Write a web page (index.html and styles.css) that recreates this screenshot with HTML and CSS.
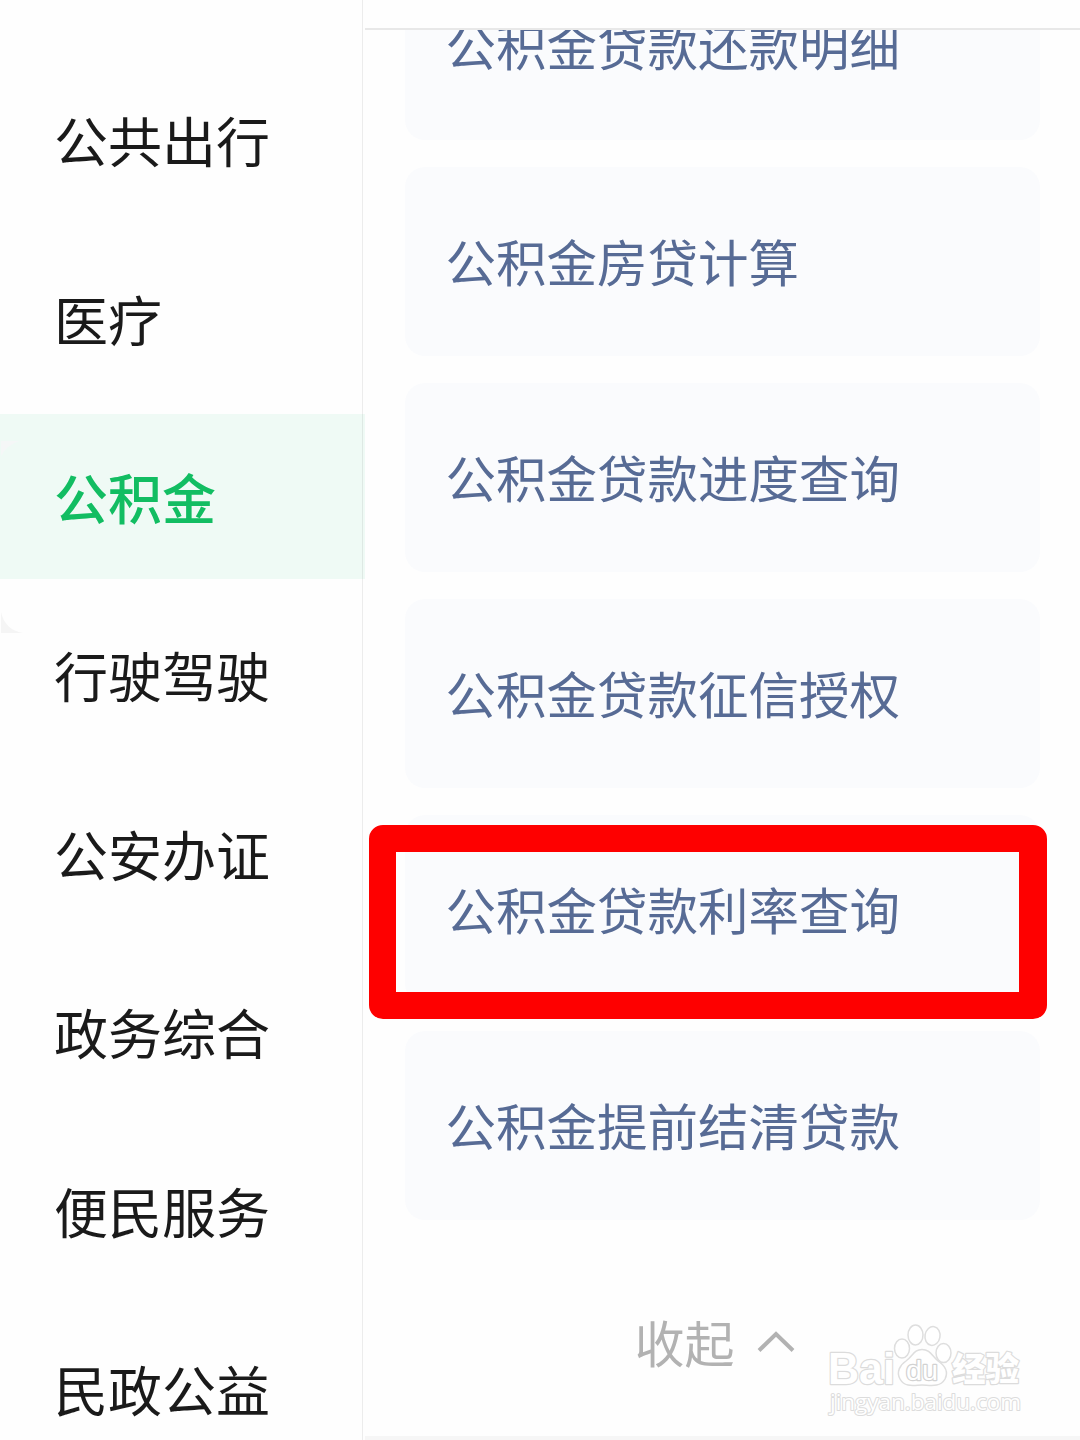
FILE: index.html
```html
<!DOCTYPE html>
<html lang="zh-CN">
<head>
  <meta charset="UTF-8" />
  <meta name="viewport" content="width=device-width, initial-scale=1.0" />
  <title>公积金</title>
  <link rel="stylesheet" href="styles.css">
</head>
<body>

<div class="page">
  <nav class="sidebar">
    <a class="nav-item">公共出行</a>
    <a class="nav-item">医疗</a>
    <a class="nav-item active">公积金</a>
    <a class="nav-item">行驶驾驶</a>
    <a class="nav-item">公安办证</a>
    <a class="nav-item">政务综合</a>
    <a class="nav-item">便民服务</a>
    <a class="nav-item">民政公益</a>
    <svg class="corners" width="24" height="194" viewBox="0 0 24 194">
      <path d="M1 1H19Q7 5 1 16Z" fill="#f5f7f7" />
      <path d="M1 172Q5 190 23 193H1Z" fill="#f5f5f5" />
    </svg>
  </nav>

  <main class="content">
    <div class="topbar"></div>
    <div class="list">
      <a class="card">公积金贷款还款明细</a>
      <a class="card">公积金房贷计算</a>
      <a class="card">公积金贷款进度查询</a>
      <a class="card">公积金贷款征信授权</a>
      <a class="card marked">公积金贷款利率查询</a>
      <a class="card">公积金提前结清贷款</a>
    </div>
    <div class="collapse">
      <span>收起</span>
      <svg width="38" height="24" viewBox="0 0 38 24">
        <path d="M2 21.500L19 5L36 21.500" fill="none" stroke="#b2b2b2" stroke-width="4" />
      </svg>
    </div>
  </main>
</div>

<!-- Watermark -->
<svg class="watermark" width="210" height="100" viewBox="0 0 210 100">
  <g class="wm-shape">
    <ellipse cx="82" cy="28.500" rx="7.500" ry="9.500" />
    <ellipse cx="95.500" cy="15" rx="7.500" ry="10" />
    <ellipse cx="112.500" cy="16" rx="7.500" ry="9.500" transform="rotate(10 112.500 16)" />
    <ellipse cx="123.500" cy="33" rx="7.500" ry="9.500" />
    <path d="M102 29.500C94 29.500 93 36 86 41C80 45 76 52 80 59C85 68 95 65 102 65C109 65 120 68 125 59C129 51 124 45 118 41C112 36 110 29.500 102 29.500Z" />
  </g>
  <text class="wm-logo" x="8" y="64" font-size="44" textLength="67" lengthAdjust="spacingAndGlyphs">Bai</text>
  <text class="wm-du" x="86" y="60" font-size="27" textLength="32" lengthAdjust="spacingAndGlyphs">du</text>
  <text class="wm-cn" x="132" y="61" font-size="33" textLength="67" lengthAdjust="spacingAndGlyphs">经验</text>
  <text class="wm-url" x="10" y="90" font-size="22" textLength="191" lengthAdjust="spacingAndGlyphs">jingyan.baidu.com</text>
</svg>

</body>
</html>
```
FILE: styles.css
```css
body {
  margin: 0;
  font-family: "Noto Sans CJK SC", sans-serif;
  background-color: #fefefe;
}

.page {
  display: flex;
  height: 1440px;
  overflow: hidden;
}

.sidebar {
  position: relative;
  box-sizing: border-box;
  width: 363px;
  flex-shrink: 0;
  display: flex;
  flex-direction: column;
  gap: 13.4px;
  padding-top: 57.2px;
  border-right: 1px solid #ececec;
}

.nav-item {
  height: 165px;
  flex-shrink: 0;
  padding-left: 54px;
  line-height: 165px;
  font-size: 54px;
  color: #1a1a1a;
}

.nav-item.active {
  margin-right: -3px;
  background-color: rgba(7, 180, 96, 0.06);
  color: #12bd62;
  font-weight: 500;
}

.corners {
  position: absolute;
  left: 0;
  top: 440px;
}

.content {
  flex: 1;
  min-width: 0;
  margin-left: 2px;
  display: flex;
  flex-direction: column;
  border-bottom: 4px solid #f6f6f6;
  box-sizing: border-box;
}

.topbar {
  height: 28px;
  flex-shrink: 0;
  border-bottom: 2px solid #e8e8e8;
}

.list {
  display: flex;
  flex-direction: column;
  justify-content: flex-end;
  gap: 27px;
  height: 1190px;
  flex-shrink: 0;
  padding: 0 40px;
  overflow: hidden;
}

.card {
  position: relative;
  box-sizing: border-box;
  height: 189px;
  flex-shrink: 0;
  padding-left: 40.5px;
  border-radius: 20px;
  background-color: #fafbfd;
  line-height: 186px;
  font-size: 50.5px;
  color: #576b95;
}

/* red frame round the rate query entry */
.card.marked::after {
  content: "";
  position: absolute;
  box-sizing: border-box;
  left: -36px;
  top: 10px;
  width: 678px;
  height: 194px;
  border: 27.5px solid #fe0000;
  border-right-width: 28px;
  border-radius: 14px;
}

.collapse {
  display: flex;
  align-items: center;
  justify-content: center;
  gap: 22px;
  height: 216px;
  padding: 26px 16px 0 0;
  box-sizing: border-box;
  flex-shrink: 0;
  font-size: 50px;
  color: #b2b2b2;
}

.watermark {
  position: absolute;
  left: 820px;
  top: 1320px;
}

.wm-shape {
  fill: #fff;
  stroke: #dedede;
  stroke-width: 1.5;
}

.watermark text {
  fill: #fff;
  stroke: #dcdcdc;
  stroke-width: 2.4;
  stroke-linejoin: round;
  paint-order: stroke;
}

.wm-logo,
.wm-du {
  font-family: "Liberation Sans", sans-serif;
  font-weight: bold;
}

.watermark .wm-du {
  font-weight: normal;
  stroke: #d2d2d2;
}

.wm-cn {
  font-weight: 900;
}

.watermark .wm-url {
  font-family: "Open Sans", sans-serif;
  stroke-width: 2;
}
```
